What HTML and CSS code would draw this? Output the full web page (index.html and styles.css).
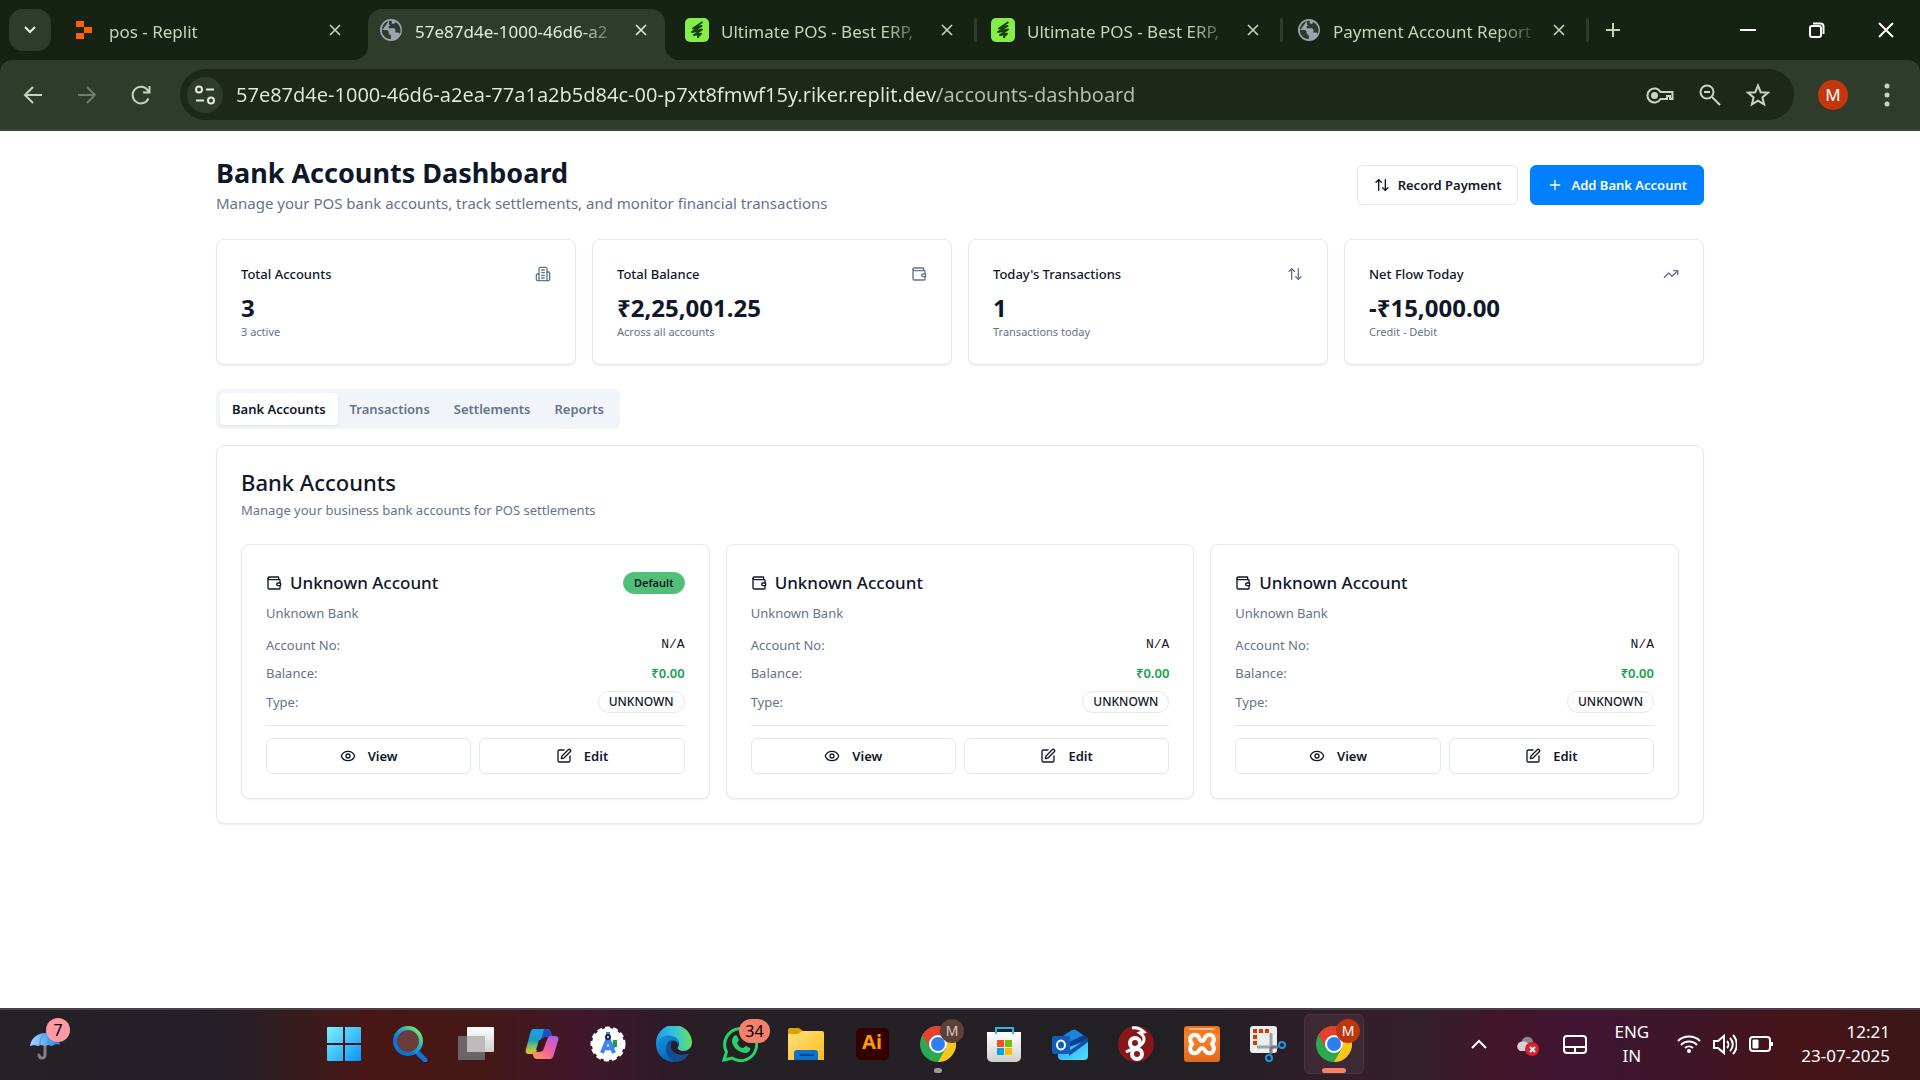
FILE: index.html
```html
<!DOCTYPE html>
<html lang="en">
<head>
<meta charset="utf-8">
<meta name="viewport" content="width=device-width, initial-scale=1">
<title>Bank Accounts Dashboard</title>
<link rel="stylesheet" href="styles.css">
</head>
<body>
<svg class="sprite" aria-hidden="true">
  <defs>
    <linearGradient id="g-win" x1="0" y1="0" x2="1" y2="1"><stop offset="0" stop-color="#7df3fb"/><stop offset="1" stop-color="#0a94f9"/></linearGradient>
    <linearGradient id="g-search" x1="0.9" y1="0.1" x2="0.3" y2="0.7"><stop offset="0" stop-color="#6bea6b"/><stop offset=".5" stop-color="#27a9c8"/><stop offset="1" stop-color="#0b75d6"/></linearGradient>
    <linearGradient id="g-light" x1="0" y1="0" x2="0" y2="1"><stop offset="0" stop-color="#fff"/><stop offset="1" stop-color="#cfcfcf"/></linearGradient>
    <linearGradient id="g-cop1" x1="0" y1="0" x2="0" y2="1"><stop offset="0" stop-color="#1ba1ee"/><stop offset=".45" stop-color="#1f9bc0"/><stop offset=".7" stop-color="#7ac26a"/><stop offset="1" stop-color="#f0c414"/></linearGradient>
    <linearGradient id="g-cop2" x1="1" y1="0" x2="0" y2="1"><stop offset="0" stop-color="#a55cf0"/><stop offset=".5" stop-color="#f0609b"/><stop offset="1" stop-color="#ffa14e"/></linearGradient>
    <linearGradient id="g-edge1" x1="0" y1=".5" x2="1" y2=".4"><stop offset="0" stop-color="#1c9be0"/><stop offset=".5" stop-color="#2fc2df"/><stop offset="1" stop-color="#6be254"/></linearGradient>
    <linearGradient id="g-edge2" x1="0" y1="0" x2=".6" y2="1"><stop offset="0" stop-color="#1595e0"/><stop offset="1" stop-color="#0a62b5"/></linearGradient>
    <linearGradient id="g-folder" x1="0" y1="0" x2="1" y2="1"><stop offset="0" stop-color="#ffe07a"/><stop offset="1" stop-color="#fdbd20"/></linearGradient>
    <linearGradient id="g-umb" x1="0" y1="0" x2="1" y2="0"><stop offset="0" stop-color="#a8d5fb"/><stop offset="1" stop-color="#1f86e8"/></linearGradient>
    <linearGradient id="g-out" x1="0" y1="0" x2="1" y2="1"><stop offset="0" stop-color="#2ba3ea"/><stop offset="1" stop-color="#4fe0ff"/></linearGradient>
    <linearGradient id="g-xampp" x1="0" y1="0" x2="0" y2="1"><stop offset="0" stop-color="#e8701c"/><stop offset=".3" stop-color="#fb8226"/><stop offset="1" stop-color="#e2691a"/></linearGradient>
  </defs>
  <symbol id="wallet" viewBox="0 0 24 24"><path d="M19 7V4a1 1 0 0 0-1-1H5a2 2 0 0 0 0 4h15a1 1 0 0 1 1 1v4h-3a2 2 0 0 0 0 4h3a1 1 0 0 0 1-1v-2a1 1 0 0 0-1-1"/><path d="M3 5v14a2 2 0 0 0 2 2h15a1 1 0 0 0 1-1v-4"/></symbol>
  <symbol id="building" viewBox="0 0 24 24"><path d="M6 22V4a2 2 0 0 1 2-2h8a2 2 0 0 1 2 2v18Z"/><path d="M6 12H4a2 2 0 0 0-2 2v6a2 2 0 0 0 2 2h2"/><path d="M18 9h2a2 2 0 0 1 2 2v9a2 2 0 0 1-2 2h-2"/><path d="M10 6h4M10 10h4M10 14h4M10 18h4"/></symbol>
  <symbol id="updown" viewBox="0 0 24 24"><path d="m21 16-4 4-4-4"/><path d="M17 20V4"/><path d="m3 8 4-4 4 4"/><path d="M7 4v16"/></symbol>
  <symbol id="trend" viewBox="0 0 24 24"><path d="m22 7-8.500 8.500-5-5L2 17"/><path d="M16 7h6v6"/></symbol>
  <symbol id="plus" viewBox="0 0 24 24"><path d="M5 12h14M12 5v14"/></symbol>
  <symbol id="eye" viewBox="0 0 24 24"><path d="M2.060 12.350a1 1 0 0 1 0-.7 10.750 10.750 0 0 1 19.880 0 1 1 0 0 1 0 .7 10.750 10.750 0 0 1-19.880 0"/><circle cx="12" cy="12" r="3"/></symbol>
  <symbol id="pen" viewBox="0 0 24 24"><path d="M12 3H5a2 2 0 0 0-2 2v14a2 2 0 0 0 2 2h14a2 2 0 0 0 2-2v-7"/><path d="M18.380 2.620a1 1 0 0 1 3 3l-9.010 9.010a2 2 0 0 1-.85.51l-2.870.84a.5.5 0 0 1-.62-.62l.84-2.870a2 2 0 0 1 .51-.85z"/></symbol>
  <symbol id="x" viewBox="0 0 24 24"><path d="m6 6 12 12M18 6 6 18"/></symbol>
  <symbol id="globe" viewBox="0 0 24 24"><circle cx="12" cy="12" r="12" fill="#9da2ae" stroke="none"/><path d="M9.500 2.300C5 3.400 2.200 7.300 2.200 12h4.600c1.700 0 2.700 1 2.700 2.700v2c1.600 0 2.400.9 2.400 2.400v2.700c-1 0-1.700 0-2.600-.2C5 20.500 2.300 17 2 12.800M9.800 2.200v2.900c0 1.500.9 2.400 2.400 2.400h-2.700v2.500h5c1.500 0 2.300.9 2.300 2.300v2.400h2.500c1.100 0 1.900.6 2.200 1.700a9.900 9.900 0 0 0-5-13.200c0 1.500-1 2-2.200 2h-1.500V2" fill="#2c3a29" stroke="none"/></symbol>
  <symbol id="bolt" viewBox="0 0 24 24"><rect width="24" height="24" rx="5" fill="#86ee48" stroke="none"/><path d="M17.500 4 8 10.500l8.500-2.500L7 14l10-2.500L9 17l7-1.300-3 2.800v1.500" fill="none" stroke="#17400c" stroke-width="2" stroke-linejoin="round"/></symbol>
  <symbol id="chrome" viewBox="0 0 36 36"><circle cx="18" cy="18" r="18" fill="#2da94f"/><path d="M18 0a18 18 0 0 1 15.600 9H18a9 9 0 0 0-7.800 13.500L2.400 9A18 18 0 0 1 18 0Z" fill="#e8402f"/><path d="M33.600 9A18 18 0 0 1 18 36l7.800-13.500A9 9 0 0 0 18 9Z" fill="#fdc51a"/><circle cx="18" cy="18" r="9" fill="#fff"/><circle cx="18" cy="18" r="7" fill="#2f7df2"/></symbol>
</svg>

<header class="browser">
  <div class="tabstrip">
    <button class="tab-search" aria-label="Search tabs"><svg class="i16" viewBox="0 0 16 16"><path d="m3 5 5 5 5-5"/></svg></button>
    <div class="tabs">
      <div class="tab"><svg class="fav" viewBox="0 0 24 24"><path d="M3 3h8v6H3zM11 9h8v6h-8zM3 15h8v6H3z" fill="#ff6200" stroke="none"/></svg><span class="tab-title">pos - Replit</span><button class="close" aria-label="Close tab"><svg class="i20"><use href="#x"/></svg></button></div>
      <div class="tab active"><svg class="fav globe"><use href="#globe"/></svg><span class="tab-title">57e87d4e-1000-46d6-a2</span><button class="close" aria-label="Close tab"><svg class="i20"><use href="#x"/></svg></button></div>
      <div class="tab sep"><svg class="fav"><use href="#bolt"/></svg><span class="tab-title">Ultimate POS - Best ERP,</span><button class="close" aria-label="Close tab"><svg class="i20"><use href="#x"/></svg></button></div>
      <div class="tab sep"><svg class="fav"><use href="#bolt"/></svg><span class="tab-title">Ultimate POS - Best ERP,</span><button class="close" aria-label="Close tab"><svg class="i20"><use href="#x"/></svg></button></div>
      <div class="tab sep"><svg class="fav globe"><use href="#globe"/></svg><span class="tab-title">Payment Account Report</span><button class="close" aria-label="Close tab"><svg class="i20"><use href="#x"/></svg></button></div>
    </div>
    <button class="new-tab" aria-label="New tab"><svg class="i24"><use href="#plus"/></svg></button>
    <div class="window-controls">
      <button aria-label="Minimize"><svg class="i16" viewBox="0 0 16 16"><path d="M0 8h16"/></svg></button>
      <button aria-label="Restore"><svg class="i16" viewBox="0 0 16 16"><rect x="1" y="4" width="11" height="11" rx="2"/><path d="M4 1.500h7.500a3 3 0 0 1 3 3V12"/></svg></button>
      <button aria-label="Close window"><svg class="i16" viewBox="0 0 16 16"><path d="m1 1 14 14M15 1 1 15"/></svg></button>
    </div>
  </div>
  <div class="toolbar">
    <nav class="nav" aria-label="History">
      <button aria-label="Back"><svg class="i24" viewBox="0 0 24 24"><path d="M21 12H4M12 4l-8 8 8 8"/></svg></button>
      <button class="dim" aria-label="Forward"><svg class="i24" viewBox="0 0 24 24"><path d="M3 12h17M12 4l8 8-8 8"/></svg></button>
      <button aria-label="Reload"><svg class="i24" viewBox="0 0 24 24"><path d="M19.500 15.500A8.300 8.300 0 1 1 18.500 7l2 2.500M20.500 3v6.500H14"/></svg></button>
    </nav>
    <div class="omnibox">
      <button class="site-info" aria-label="Site information"><svg class="i24" viewBox="0 0 24 24"><circle cx="6" cy="6.500" r="3"/><path d="M13 6.500h8M3 17.500h8"/><circle cx="18" cy="17.500" r="3"/></svg></button>
      <input class="url" type="text" aria-label="Address" value="57e87d4e-1000-46d6-a2ea-77a1a2b5d84c-00-p7xt8fmwf15y.riker.replit.dev/accounts-dashboard">
      <div class="omnibox-actions">
        <button aria-label="Passwords"><svg class="i28" viewBox="0 0 28 28"><path d="M15 11h11.500v7H24v-3h-3v3h-6.500a7 7 0 1 1 0-7Z"/><circle cx="8.500" cy="14.500" r="2.500" fill="currentColor"/></svg></button>
        <button aria-label="Zoom"><svg class="i24" viewBox="0 0 24 24"><circle cx="9" cy="9" r="6.500"/><path d="m14 14 8 8M6 9h6"/></svg></button>
        <button aria-label="Bookmark"><svg class="i24" viewBox="0 0 24 24"><path d="m12 2.500 2.700 6.700 7.200.5-5.500 4.700 1.700 7L12 17.600l-6.100 3.800 1.700-7-5.500-4.700 7.200-.5Z"/></svg></button>
      </div>
    </div>
    <button class="avatar" aria-label="Profile">M</button>
    <button class="menu" aria-label="Menu"><svg class="i24" viewBox="0 0 24 24"><g fill="currentColor" stroke="none"><circle cx="12" cy="3" r="2.500"/><circle cx="12" cy="12" r="2.500"/><circle cx="12" cy="21" r="2.500"/></g></svg></button>
  </div>
</header>

<main class="page">
  <div class="container">
    <div class="page-head">
      <div>
        <h1>Bank Accounts Dashboard</h1>
        <p class="lead">Manage your POS bank accounts, track settlements, and monitor financial transactions</p>
      </div>
      <div class="actions">
        <button class="btn"><svg class="i16"><use href="#updown"/></svg>Record Payment</button>
        <button class="btn primary"><svg class="i16"><use href="#plus"/></svg>Add Bank Account</button>
      </div>
    </div>

    <section class="stats" aria-label="Summary">
      <article class="card stat"><div class="stat-head"><h2>Total Accounts</h2><svg class="i16"><use href="#building"/></svg></div><p class="value">3</p><p class="note">3 active</p></article>
      <article class="card stat"><div class="stat-head"><h2>Total Balance</h2><svg class="i16"><use href="#wallet"/></svg></div><p class="value">₹2,25,001.25</p><p class="note">Across all accounts</p></article>
      <article class="card stat"><div class="stat-head"><h2>Today's Transactions</h2><svg class="i16"><use href="#updown"/></svg></div><p class="value">1</p><p class="note">Transactions today</p></article>
      <article class="card stat"><div class="stat-head"><h2>Net Flow Today</h2><svg class="i16"><use href="#trend"/></svg></div><p class="value">-₹15,000.00</p><p class="note">Credit - Debit</p></article>
    </section>

    <div class="tablist" role="tablist">
      <button role="tab" aria-selected="true">Bank Accounts</button>
      <button role="tab" aria-selected="false">Transactions</button>
      <button role="tab" aria-selected="false">Settlements</button>
      <button role="tab" aria-selected="false">Reports</button>
    </div>

    <section class="card panel">
      <h2>Bank Accounts</h2>
      <p class="desc">Manage your business bank accounts for POS settlements</p>
      <div class="accounts">
        <article class="card account">
          <div class="account-head"><svg class="i16"><use href="#wallet"/></svg><h3>Unknown Account</h3><span class="badge default">Default</span></div>
          <p class="bank">Unknown Bank</p>
          <dl>
            <div><dt>Account No:</dt><dd class="mono">N/A</dd></div>
            <div><dt>Balance:</dt><dd class="amount">₹0.00</dd></div>
            <div><dt>Type:</dt><dd class="badge">UNKNOWN</dd></div>
          </dl>
          <div class="account-actions"><button class="btn small"><svg class="i16"><use href="#eye"/></svg>View</button><button class="btn small"><svg class="i16"><use href="#pen"/></svg>Edit</button></div>
        </article>
        <article class="card account">
          <div class="account-head"><svg class="i16"><use href="#wallet"/></svg><h3>Unknown Account</h3></div>
          <p class="bank">Unknown Bank</p>
          <dl>
            <div><dt>Account No:</dt><dd class="mono">N/A</dd></div>
            <div><dt>Balance:</dt><dd class="amount">₹0.00</dd></div>
            <div><dt>Type:</dt><dd class="badge">UNKNOWN</dd></div>
          </dl>
          <div class="account-actions"><button class="btn small"><svg class="i16"><use href="#eye"/></svg>View</button><button class="btn small"><svg class="i16"><use href="#pen"/></svg>Edit</button></div>
        </article>
        <article class="card account">
          <div class="account-head"><svg class="i16"><use href="#wallet"/></svg><h3>Unknown Account</h3></div>
          <p class="bank">Unknown Bank</p>
          <dl>
            <div><dt>Account No:</dt><dd class="mono">N/A</dd></div>
            <div><dt>Balance:</dt><dd class="amount">₹0.00</dd></div>
            <div><dt>Type:</dt><dd class="badge">UNKNOWN</dd></div>
          </dl>
          <div class="account-actions"><button class="btn small"><svg class="i16"><use href="#eye"/></svg>View</button><button class="btn small"><svg class="i16"><use href="#pen"/></svg>Edit</button></div>
        </article>
      </div>
    </section>
  </div>
</main>

<footer class="taskbar">
  <div class="widgets">
    <button class="widget" aria-label="Weather, 7 alerts">
      <svg class="app-icon" viewBox="0 0 36 36"><path d="M17 15v14a3 3 0 0 1-6 0" fill="none" stroke="#85807f" stroke-width="3" stroke-linecap="round"/><path d="M2 20C3 12 10 7 17 7s14 5 15 12l-4-1-4 2-4-1-3 1-4-1-3 1-4-1Z" fill="url(#g-umb)"/><path d="M17 7c-4 3-5 8-5 12M17 7c4 3 4 8 4 12" fill="none" stroke="#3f92e6" stroke-width="1"/></svg>
      <span class="count pink">7</span>
    </button>
  </div>
  <div class="apps">
    <button aria-label="Start"><svg class="app-icon" viewBox="0 0 36 36"><path d="M1 2a1 1 0 0 1 1-1h15v16H1ZM19 1h15a1 1 0 0 1 1 1v15H19ZM1 19h16v16H2a1 1 0 0 1-1-1ZM19 19h16v15a1 1 0 0 1-1 1H19Z" fill="url(#g-win)"/></svg></button>
    <button aria-label="Search"><svg class="app-icon" viewBox="0 0 36 36"><path d="m25 26 8 8" stroke="#0b75d6" stroke-width="5" stroke-linecap="round"/><circle cx="16" cy="15" r="13" fill="#6b3c3c" stroke="url(#g-search)" stroke-width="4"/></svg></button>
    <button aria-label="Task view"><svg class="app-icon" viewBox="0 0 36 36"><rect x="0" y="10" width="27" height="24" rx="1" fill="#676565"/><rect x="9" y="1" width="27" height="25" rx="1" fill="url(#g-light)"/><path d="M9 10h18v16H9z" fill="#bcbaba"/></svg></button>
    <button aria-label="Copilot"><svg class="app-icon" viewBox="0 0 36 36"><path d="M10 3h13c2 0 3 1 4 4l1 4h-7c-3 0-4 1-5 4l-3 9c-1 3-2 4-4 4H5c-3 0-4-2-3-5l4-15c1-4 2-5 4-5Z" fill="url(#g-cop1)"/><path d="M20 3h3c2 0 3 1 4 4l1 4h-7c-2 0-3 1-4 3Z" fill="#2050c8"/><path d="M26 33H13c-2 0-3-1-4-4l-1-3h7c3 0 4-1 5-4l3-8c1-3 2-4 4-4h4c3 0 4 2 3 5l-4 13c-1 4-2 5-4 5Z" fill="url(#g-cop2)"/><path d="M15 14h5l-4 10h-4Z" fill="#3a1526"/></svg></button>
    <button aria-label="Android Studio"><svg class="app-icon" viewBox="0 0 36 36"><circle cx="18" cy="18" r="16" fill="#fff" stroke="#fff" stroke-width="3" stroke-dasharray="5 3"/><path d="M23 14h4v7h-5z" fill="#239b4e"/><path d="M18 12 12 27M18 12l6 15M13 21c3 2 8 2 11-1" fill="none" stroke="#3f82f0" stroke-width="4"/><path d="M18 6v5" stroke="#3f82f0" stroke-width="4"/><circle cx="18" cy="11" r="2" fill="#fff" stroke="#1b2733" stroke-width="2"/></svg></button>
    <button aria-label="Edge"><svg class="app-icon" viewBox="0 0 36 36"><path d="M0 18A18 18 0 0 1 36 16c0 6-4 9-9 9-4 0-6-2-5-4 3-5-1-9-6-9C8 12 3 15 0 18Z" fill="url(#g-edge1)"/><path d="M0 18C2 12 9 8 16 10c5 1 8 5 6 10 0-4-3-6-6-5-5 2-7 9-2 15l4 6C8 36 0 28 0 18Z" fill="url(#g-edge2)"/><path d="M13 15c-4 5-5 15 6 21 7 0 12-4 14-9-8 4-19 1-18-8 0-2 1-4 3-5-2 0-4 0-5 1Z" fill="#124f92"/></svg></button>
    <button aria-label="WhatsApp"><svg class="app-icon" viewBox="0 0 36 36"><path d="M2 34 4.500 26A16 16 0 1 1 10 32Z" fill="none" stroke="#25d366" stroke-width="3"/><path d="M12 10c1-1 3-1 3 0l2 4c0 1-2 2-2 3 1 3 4 5 6 5 1 0 2-2 3-2l4 2c1 1-1 5-4 5-8 0-14-7-14-12 0-2 1-4 2-5Z" fill="#25d366"/></svg><span class="count coral">34</span></button>
    <button aria-label="File Explorer"><svg class="app-icon" viewBox="0 0 36 36"><path d="M0 4a2 2 0 0 1 2-2h9l4 3-4 5H0Z" fill="#e0a106"/><path d="M0 8h10l4-3h20a2 2 0 0 1 2 2v27H0Z" fill="url(#g-folder)"/><path d="M6 34V27a3 3 0 0 1 3-3h18a3 3 0 0 1 3 3v7Z" fill="#0f72c8"/><path d="M12 29h13" stroke="#0a4a88" stroke-width="2" stroke-linecap="round"/></svg></button>
    <button aria-label="Illustrator"><span class="ai">Ai</span></button>
    <button class="running" aria-label="Chrome"><svg class="app-icon"><use href="#chrome"/></svg><span class="count person brown">M</span></button>
    <button aria-label="Store"><svg class="app-icon" viewBox="0 0 36 36"><path d="M1 6h34v25a5 5 0 0 1-5 5H6a5 5 0 0 1-5-5Z" fill="url(#g-light)"/><path d="M10 8V2h17v6" fill="none" stroke="#28b5ea" stroke-width="2"/><path d="M11 14h7v7h-7z" fill="#f25022"/><path d="M19 14h7v7h-7z" fill="#7fba00"/><path d="M11 22h7v7h-7z" fill="#00a4ef"/><path d="M19 22h7v7h-7z" fill="#ffb900"/></svg></button>
    <button aria-label="Outlook"><svg class="app-icon" viewBox="0 0 36 36"><path d="M6 13 20 4q2-1 4 0l10 7q2 1 2 3v13H6Z" fill="#1787d8"/><path d="m17 16 15-7 4 3-18 14Z" fill="#0b3d91"/><path d="M6 25 36 14v16a4 4 0 0 1-4 4H10a4 4 0 0 1-4-4Z" fill="url(#g-out)"/><path d="M17 25 36 12v4L17 30Z" fill="#1450a8"/><rect x="0" y="10" width="18" height="18" rx="2" fill="#0f5fb8"/><ellipse cx="9" cy="19" rx="4" ry="4.500" fill="none" stroke="#fff" stroke-width="2"/></svg></button>
    <button aria-label="WireGuard"><svg class="app-icon" viewBox="0 0 36 36"><circle cx="18" cy="18" r="18" fill="#88171a"/><path d="M14 2c5-1 8 0 12 4l-4 1c6 4 5 10-1 13" fill="none" stroke="#fff" stroke-width="3"/><circle cx="17" cy="17" r="5" fill="none" stroke="#fff" stroke-width="4"/><circle cx="19" cy="28" r="5" fill="none" stroke="#fff" stroke-width="4"/><path d="M24 17c-3 5-9 5-16 9" fill="none" stroke="#fff" stroke-width="3"/></svg></button>
    <button aria-label="XAMPP"><svg class="app-icon" viewBox="0 0 36 36"><rect width="36" height="36" rx="3" fill="url(#g-xampp)"/><path d="M4 2h28q-1 2-4 2H8Q5 4 4 2Z" fill="#fbb98a"/><path d="M8 18C4 13 7 8 12 9c4 1 3 6 6 6s2-5 6-6c5-1 8 4 4 9 4 5 1 10-4 9-4-1-3-5-6-5s-2 4-6 5c-5 1-8-4-4-9Z" fill="none" stroke="#fff" stroke-width="4"/></svg></button>
    <button aria-label="Snipping Tool"><svg class="app-icon" viewBox="0 0 36 36"><rect width="27" height="27" rx="3" fill="#eceef0"/><path d="M3 5h17M5 3v17" fill="none" stroke="#d83b01" stroke-width="4" stroke-dasharray="4 2"/><path d="M21 7v18M7 21h18" stroke="#9aa2aa" stroke-width="3"/><path d="m21 21 7 0M21 21v7" stroke="#727b84" stroke-width="3"/><circle cx="32" cy="19" r="3" fill="none" stroke="#2493df" stroke-width="2"/><circle cx="19" cy="32" r="3" fill="none" stroke="#2493df" stroke-width="2"/></svg></button>
    <button class="current" aria-label="Chrome, M"><svg class="app-icon"><use href="#chrome"/></svg><span class="count person red">M</span></button>
  </div>
  <div class="tray">
    <button aria-label="Hidden icons"><svg class="i24" viewBox="0 0 24 24"><path d="m5 16 7-7 7 7"/></svg></button>
    <button aria-label="OneDrive"><svg class="i24" viewBox="0 0 24 24"><g stroke="none"><path d="M7 8a6 6 0 0 1 11 1v6H8Z" fill="#8f8488"/><path d="M5 19a5 5 0 0 1 0-9c4-2 8 0 9 3v6Z" fill="#d8d0d3"/><circle cx="17" cy="17" r="7" fill="#d9222a"/></g><path d="m15 15 5 5M20 15l-5 5"/></svg></button>
    <button aria-label="Touchpad"><svg class="i24" viewBox="0 0 24 24"><rect x="1" y="4" width="22" height="17" rx="3"/><path d="M1 15h22M12 15v6"/></svg></button>
    <button class="lang">ENG<br>IN</button>
    <button class="status" aria-label="Network, sound, battery">
      <svg class="i24" viewBox="0 0 24 24"><path d="M1 9a16 16 0 0 1 22 0M4 13a11 11 0 0 1 16 0M8 16a6 6 0 0 1 8 0"/><circle cx="12" cy="19" r="1" fill="currentColor"/></svg>
      <svg class="i24" viewBox="0 0 24 24"><path d="M1 9h4l6-5v17l-6-5H1ZM14 9a5 5 0 0 1 0 7M17 6a9 9 0 0 1 0 13M20 3a14 14 0 0 1 0 19"/></svg>
      <svg class="i24" viewBox="0 0 24 24"><rect x="1" y="5" width="20" height="14" rx="3"/><path d="M4 8h5v8H4z" fill="currentColor" stroke-width="1"/><path d="M23 10v4"/></svg>
    </button>
    <button class="clock">12:21<br>23-07-2025</button>
  </div>
</footer>
</body>
</html>
```
FILE: styles.css
```css
* { box-sizing: border-box; margin: 0; padding: 0; }

:root {
  --ink: #0f172a;
  --muted: #64748b;
  --line: #e2e8f0;
  --strip: #162213;
  --bar: #2f3c2c;
  --chrome-ink: #c3d5bb;
}

body {
  display: flex;
  flex-direction: column;
  min-height: 100vh;
  font-family: "Noto Sans", "Open Sans", sans-serif;
  font-size: 13px;
  line-height: 20px;
  color: var(--ink);
  background: #fff;
}

button, input { font: inherit; color: inherit; background: none; border: 0; }
button { display: flex; align-items: center; justify-content: center; cursor: pointer; }

svg { flex: none; fill: none; stroke: currentColor; stroke-width: 2; }
.sprite { position: absolute; width: 0; height: 0; }
.i16 { width: 16px; height: 16px; }
.i20 { width: 20px; height: 20px; }
.i24 { width: 24px; height: 24px; }
.i28 { width: 28px; height: 28px; }
.page svg { stroke-linecap: round; stroke-linejoin: round; }

/* Browser window */
.browser { background: var(--strip); color: var(--chrome-ink); }
.tabstrip { display: flex; height: 60px; padding: 9px 0 0 9px; }
.tab-search { width: 42px; height: 42px; margin-right: 11px; border-radius: 14px; background: var(--bar); color: #e6efe0; }
.tabs { display: flex; gap: 9px; min-width: 0; }
.tab {
  position: relative;
  display: flex;
  align-items: center;
  width: 297px;
  padding: 0 12px 9px 11px;
  border-radius: 14px 14px 0 0;
}
.tab.active { background: var(--bar); color: #e3e9dd; }
.tab.active::before, .tab.active::after {
  content: "";
  position: absolute;
  bottom: 0;
  width: 14px;
  height: 14px;
}
.tab.active::before { right: 100%; background: radial-gradient(circle at 0 0, transparent 14px, var(--bar) 14px); }
.tab.active::after { left: 100%; background: radial-gradient(circle at 100% 0, transparent 14px, var(--bar) 14px); }
.tab.sep::after {
  content: "";
  position: absolute;
  top: 9px;
  right: -6px;
  width: 3px;
  height: 24px;
  border-radius: 2px;
  background: var(--bar);
}
.fav { width: 24px; height: 24px; margin-right: 12px; }
.fav.globe { padding: 1px; }
.tab-title {
  flex: 1;
  padding-top: 3px;
  white-space: nowrap;
  font-size: 17px;
  line-height: 24px;
  -webkit-mask-image: linear-gradient(90deg, #000 80%, transparent);
  mask-image: linear-gradient(90deg, #000 80%, transparent);
}
.close { width: 24px; height: 24px; margin-left: 8px; }
.new-tab { width: 42px; height: 42px; margin-left: 9px; }
.window-controls { display: flex; margin-left: auto; color: #fff; }
.window-controls button { width: 69px; height: 42px; }

.toolbar {
  display: flex;
  align-items: center;
  height: 71px;
  padding: 0 21px 0 6px;
  border-bottom: 2px solid #3b4739;
  border-radius: 12px 12px 0 0;
  background: var(--bar);
}
.nav { display: flex; }
.nav button { width: 54px; height: 42px; }
.nav .dim { color: #6f7d6a; }
.omnibox {
  display: flex;
  flex: 1;
  align-items: center;
  height: 51px;
  margin-left: 12px;
  padding: 0 24px 0 7px;
  border-radius: 26px;
  background: #1d271a;
  color: #cdd3c6;
}
.omnibox-actions { display: flex; gap: 24px; margin-left: 24px; }
.site-info { width: 36px; height: 36px; border-radius: 50%; background: var(--bar); color: #e3e9dd; }
.url {
  flex: 1;
  min-width: 0;
  height: 36px;
  margin-left: 13px;
  font-size: 20px;
  color: transparent;
  background: linear-gradient(90deg, #e3e9dd 702px, #b8beb1 702px);
  -webkit-background-clip: text;
  background-clip: text;
}
.avatar { width: 30px; height: 30px; margin-left: 24px; border-radius: 50%; background: #c5360c; color: #fff; font-size: 17px; }
.menu { width: 24px; height: 30px; margin-left: 27px; }

/* Dashboard */
.page { flex: 1; padding: 24px; }
.container { max-width: 1488px; margin: 0 auto; }
.page-head { display: flex; align-items: center; justify-content: space-between; margin-bottom: 24px; }
h1 { font-size: 27px; line-height: 36px; font-weight: 700; }
.lead { font-size: 15px; line-height: 24px; color: var(--muted); }
.actions { display: flex; gap: 12px; }

.btn {
  gap: 8px;
  height: 40px;
  padding: 0 16px;
  border: 1px solid var(--line);
  border-radius: 6px;
  background: #fff;
  font-weight: 600;
}
.btn.primary { border-color: #0080ff; background: #0080ff; color: #fff; }
.btn.small { gap: 12px; height: 36px; }

.card { border: 1px solid var(--line); border-radius: 8px; background: #fff; box-shadow: 0 1px 2px rgba(15, 23, 42, .06); }
.stats { display: grid; grid-template-columns: repeat(4, 1fr); gap: 16px; margin-bottom: 24px; }
.stat { padding: 24px; }
.stat-head { display: flex; align-items: center; justify-content: space-between; margin-bottom: 8px; color: var(--muted); }
.stat h2 { font-size: 13px; line-height: 20px; font-weight: 500; color: var(--ink); }
.value { font-size: 24px; line-height: 32px; font-weight: 700; }
.note { font-size: 11px; line-height: 16px; color: var(--muted); }

.tablist { display: inline-flex; height: 40px; padding: 4px; border-radius: 6px; background: #f1f5f9; color: var(--muted); }
.tablist button { padding: 0 12px; border-radius: 4px; font-weight: 600; }
.tablist [aria-selected="true"] { background: #fff; color: var(--ink); box-shadow: 0 1px 2px rgba(15, 23, 42, .08); }

.panel { margin-top: 16px; padding: 24px; }
.panel h2 { margin-bottom: 6px; font-size: 22px; line-height: 24px; font-weight: 500; }
.desc, .bank, dt { color: var(--muted); }
.accounts { display: grid; grid-template-columns: repeat(3, 1fr); gap: 16px; margin-top: 24px; }
.account { padding: 24px; }
.account-head { display: flex; align-items: center; gap: 8px; margin-bottom: 6px; }
.account h3 { font-size: 17px; line-height: 28px; font-weight: 500; }
.bank { margin-bottom: 12px; }
dl { display: grid; gap: 8px; }
dl div { display: flex; align-items: center; justify-content: space-between; }
.mono { font-family: "Liberation Mono", monospace; }
.amount { font-weight: 600; color: #16a34a; }
.badge { padding: 2px 10px; border: 1px solid var(--line); border-radius: 11px; font-size: 12px; line-height: 16px; font-weight: 500; }
.badge.default { margin-left: auto; border-color: #50bf77; background: #50bf77; font-size: 11px; font-weight: 600; }
.account-actions { display: grid; grid-template-columns: 1fr 1fr; gap: 8px; margin-top: 12px; padding-top: 12px; border-top: 1px solid var(--line); }

/* Taskbar */
.taskbar {
  display: flex;
  align-items: center;
  height: 72px;
  padding-bottom: 2px;
  border-top: 2px solid #4b4248;
  color: #fff;
  background: linear-gradient(90deg, #262127 0%, #221f26 11%, #2e1e22 14%, #4a1616 19%, #431815 25%, #42172b 30%, #2c1b26 35%, #242026 39%, #221f25 63%, #351e29 71%, #33202a 74%, #431628 78%, #401533 82%, #3d1629 87%, #471419 94%, #3a1719 100%);
}
.widgets { flex: 0 0 314px; padding-left: 28px; }
.widget { position: relative; width: 36px; height: 36px; }
.app-icon { width: 36px; height: 36px; stroke: none; }
.apps { display: flex; gap: 6px; }
.apps button { position: relative; width: 60px; height: 60px; }
.apps .current { border: 1px solid #48343f; border-radius: 6px; background: #3d2a35; }
.running::after, .current::after {
  content: "";
  position: absolute;
  bottom: 1px;
  left: 50%;
  width: 8px;
  height: 5px;
  margin-left: -4px;
  border-radius: 3px;
  background: #9b979b;
}
.current::after { bottom: 0; width: 24px; margin-left: -12px; background: #f7806a; }
.ai { width: 33px; height: 32px; border-radius: 5px; background: #330000; color: #ff9a00; font-size: 20px; line-height: 28px; font-weight: 700; }
.count {
  position: absolute;
  top: 5px;
  right: 0;
  min-width: 24px;
  height: 24px;
  border-radius: 12px;
  color: #000;
  font-size: 16px;
  line-height: 24px;
  text-align: center;
}
.pink { top: -8px; right: -6px; background: #ff99a4; }
.coral { width: 31px; background: #f7806a; }
.person { right: 4px; color: #fff; font-size: 14px; }
.brown { background: #5d4037; color: #d5ccca; }
.red { background: #bf360c; }
.current .person { top: 4px; right: 3px; }

.tray { display: flex; align-items: center; gap: 24px; margin-left: auto; padding-right: 30px; font-size: 17px; line-height: 24px; }
.lang { padding: 0 4px; text-align: center; }
.status { gap: 12px; margin-right: 4px; }
.clock { text-align: right; }
```
